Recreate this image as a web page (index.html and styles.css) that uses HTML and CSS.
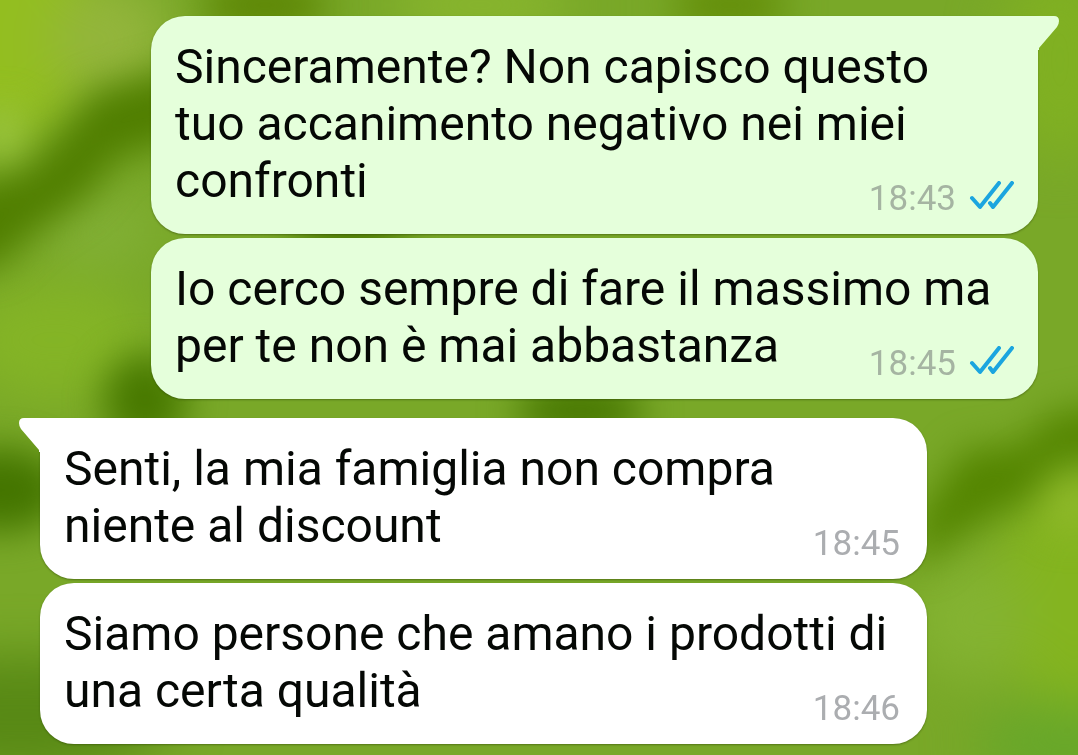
FILE: index.html
```html
<!DOCTYPE html>
<html lang="it">
<head>
<meta charset="utf-8">
<meta name="viewport" content="width=device-width, initial-scale=1">
<title>Chat</title>
<link rel="stylesheet" href="styles.css">
</head>
<body>
<svg class="wallpaper" viewBox="0 0 1078 755" preserveAspectRatio="none" aria-hidden="true">
  <defs>
    <filter id="soft" x="-100%" y="-100%" width="300%" height="300%" color-interpolation-filters="sRGB"><feGaussianBlur stdDeviation="18"/></filter>
    <filter id="wide" x="-100%" y="-100%" width="300%" height="300%" color-interpolation-filters="sRGB"><feGaussianBlur stdDeviation="26"/></filter>
  </defs>
  <rect width="1078" height="755" fill="#79a828"/>
  <g filter="url(#wide)">
    <ellipse cx="10" cy="30" rx="90" ry="110" fill="#93be20"/>
    <ellipse cx="110" cy="40" rx="60" ry="60" fill="#93b53c"/>
    <ellipse cx="100" cy="230" rx="60" ry="35" fill="#82b036"/>
    <ellipse cx="55" cy="340" rx="95" ry="60" fill="#84b426"/>
    <ellipse cx="1075" cy="590" rx="80" ry="120" fill="#84b41f"/>
    <ellipse cx="970" cy="620" rx="60" ry="60" fill="#84b332"/>
    <ellipse cx="1060" cy="745" rx="85" ry="42" fill="#67a72a"/>
    <ellipse cx="20" cy="715" rx="150" ry="60" fill="#588915"/>
    <ellipse cx="480" cy="5" rx="90" ry="40" fill="#88b52e"/>
    <ellipse cx="1060" cy="60" rx="60" ry="100" fill="#80b022"/>
  </g>
  <g filter="url(#soft)">
    <ellipse cx="3" cy="135" rx="16" ry="30" fill="#a0ca45"/>
    <path d="M-60 195 30 168 65 130 95 92 190 65 190 140 120 155 85 198 30 235 0 265-60 275Z" fill="#507e00"/>
    <ellipse cx="145" cy="400" rx="42" ry="46" fill="#487900"/>
    <ellipse cx="265" cy="5" rx="65" ry="24" fill="#5b8402"/>
    <ellipse cx="730" cy="5" rx="60" ry="22" fill="#618b05"/>
    <ellipse cx="580" cy="410" rx="65" ry="26" fill="#467600"/>
    <path d="M1130 400 1050 415 1020 445 965 450 930 500 915 530 920 570 945 545 985 520 1030 500 1055 465 1130 455Z" fill="#548500"/>
    <ellipse cx="0" cy="490" rx="64" ry="42" fill="#447500"/>
    <ellipse cx="1070" cy="505" rx="26" ry="28" fill="#8fb92a"/>
    <ellipse cx="350" cy="237" rx="60" ry="22" fill="#4b7900"/>
  </g>
</svg>
<main class="chat">
  <section class="group group-own">
    <article class="bubble bubble-tail">
      <svg class="tail" viewBox="0 0 22 34" aria-hidden="true"><path d="M0 0H16Q21 0 21 5Q21 8 19 11L1 32V34H0Z"/></svg>
      <p class="text">Sinceramente? Non capisco questo<br>tuo accanimento negativo nei miei<br>confronti</p>
      <div class="meta"><time>18:43</time><svg class="ticks" viewBox="0 0 46 30" role="img" aria-label="Letto"><path d="M4 17 12 26 31 2M22 22 25 26 44 2"/></svg></div>
    </article>
    <article class="bubble">
      <p class="text">Io cerco sempre di fare il massimo ma<br>per te non è mai abbastanza</p>
      <div class="meta"><time>18:45</time><svg class="ticks" viewBox="0 0 46 30" role="img" aria-label="Letto"><path d="M4 17 12 26 31 2M22 22 25 26 44 2"/></svg></div>
    </article>
  </section>
  <section class="group group-other">
    <article class="bubble bubble-tail">
      <svg class="tail" viewBox="0 0 22 34" aria-hidden="true"><path d="M22 0H6Q1 0 1 5Q1 8 3 11L21 32V34H22Z"/></svg>
      <p class="text">Senti, la mia famiglia non compra<br>niente al discount</p>
      <div class="meta"><time>18:45</time></div>
    </article>
    <article class="bubble">
      <p class="text">Siamo persone che amano i prodotti di<br>una certa qualità</p>
      <div class="meta"><time>18:46</time></div>
    </article>
  </section>
</main>
</body>
</html>
```

FILE: styles.css
```css
* {
  box-sizing: border-box;
}

body {
  margin: 0;
  background: #79a828;
  font-family: Roboto, "Liberation Sans", sans-serif;
}

.wallpaper {
  position: fixed;
  inset: 0;
  z-index: -1;
  width: 100%;
  height: 100%;
}

.chat {
  display: flex;
  flex-direction: column;
  gap: 19px;
  padding: 16px 40px 8px;
}

.group {
  display: flex;
  flex-direction: column;
  gap: 4px;
}

.group-own {
  margin-left: 111px;
  --bubble: #e5ffdb;
  --time: #a5b4a2;
  --meta-end: 24px;
}

.group-other {
  margin-right: 111px;
  --bubble: #ffffff;
  --time: #abadb0;
  --meta-end: 27px;
}

.bubble {
  position: relative;
  display: grid;
  padding: 22px var(--meta-end) 25px 24px;
  border-radius: 34px;
  background: var(--bubble);
  box-shadow: 0 1px 2px rgba(40, 60, 0, 0.45);
}

.group-own .bubble-tail {
  border-top-right-radius: 0;
}

.group-other .bubble-tail {
  border-top-left-radius: 0;
}

.tail {
  position: absolute;
  top: 0;
  width: 22px;
  height: 34px;
  fill: var(--bubble);
}

.group-own .tail {
  left: 100%;
}

.group-other .tail {
  right: 100%;
}

.text {
  grid-area: 1 / 1;
  margin: 0;
  color: #050805;
  font-size: 48px;
  line-height: 57px;
}

.meta {
  grid-area: 1 / 1;
  place-self: end;
  display: flex;
  align-items: center;
  gap: 12px;
  margin-bottom: -11px;
  color: var(--time);
  font-size: 35px;
  line-height: 42px;
}

.ticks {
  width: 46px;
  height: 30px;
  margin-bottom: 6px;
  fill: none;
  stroke: #1ba5df;
  stroke-width: 4;
  stroke-linecap: round;
  stroke-linejoin: round;
}
```
